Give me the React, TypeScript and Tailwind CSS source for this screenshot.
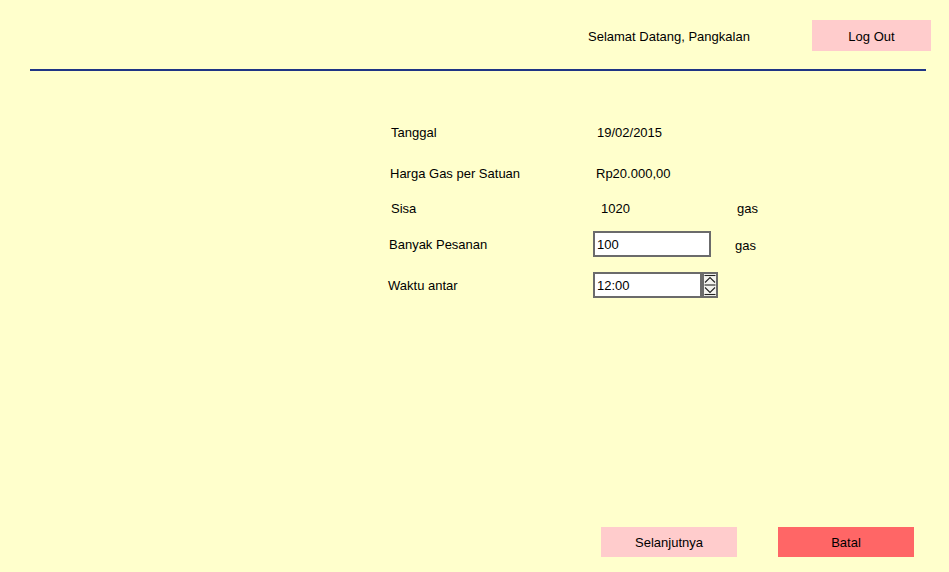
import React from "react";

function Spinner() {
  return (
    <div className="w-[16px] h-[26px] border-2 border-[#6b6b6b] bg-[#f4f4f0] flex items-center justify-center">
      <svg width="12" height="22" viewBox="0 0 12 22" fill="none" stroke="#222" strokeWidth="1.1">
        <line x1="0.5" y1="1.5" x2="11.5" y2="1.5" />
        <polyline points="1,8.5 6,3.5 11,8.5" />
        <line x1="0.5" y1="11" x2="11.5" y2="11" />
        <polyline points="1,13.5 6,18.5 11,13.5" />
        <line x1="0.5" y1="20.5" x2="11.5" y2="20.5" />
      </svg>
    </div>
  );
}

export default function App() {
  return (
    <div className="w-[949px] h-[572px] bg-[#ffffcc] flex flex-col text-[13px] text-black font-['Liberation_Sans',Arial,sans-serif] overflow-hidden">
      {/* Header */}
      <div className="flex items-center pt-[20px] h-[51px]">
        <span className="ml-[588px] pt-[2px]">Selamat Datang, Pangkalan</span>
        <button className="ml-auto mr-[18px] w-[119px] h-[31px] bg-[#ffcccc] text-[13px] pt-[2px]">Log Out</button>
      </div>
      <div className="mt-[18px] ml-[30px] w-[896px] h-[2px] bg-[#1f3585]" />

      {/* Form */}
      <div className="mt-[41px] ml-[388px] flex flex-col">
        <div className="flex items-center h-[40px] pt-[2px]">
          <div className="w-[205px] pl-[3px]">Tanggal</div>
          <div className="pl-[4px]">19/02/2015</div>
        </div>
        <div className="flex items-center h-[42px] pt-[2px]">
          <div className="w-[205px] pl-[2px]">Harga Gas per Satuan</div>
          <div className="pl-[3px]">Rp20.000,00</div>
        </div>
        <div className="flex items-center h-[28px] pt-[2px]">
          <div className="w-[205px] pl-[3px]">Sisa</div>
          <div className="w-[144px] pl-[8px]">1020</div>
          <div>gas</div>
        </div>
        <div className="flex items-center h-[44px]">
          <div className="w-[205px] pl-[1px] pt-[2px]">Banyak Pesanan</div>
          <div className="w-[118px] h-[26px] border-2 border-[#6b6b6b] bg-white flex items-center pl-[2px] pt-[1px]">100</div>
          <div className="ml-[24px] pt-[4px]">gas</div>
        </div>
        <div className="flex items-center h-[38px]">
          <div className="w-[205px] pt-[2px]">Waktu antar</div>
          <div className="w-[109px] h-[26px] border-2 border-[#6b6b6b] bg-white flex items-center pl-[2px] pt-[2px]">12:00</div>
          <Spinner />
        </div>
      </div>

      {/* Footer */}
      <div className="mt-auto mb-[15px] flex justify-end gap-[41px] mr-[35px]">
        <button className="w-[136px] h-[30px] bg-[#ffcccc] text-[13px] pt-[2px]">Selanjutnya</button>
        <button className="w-[136px] h-[30px] bg-[#ff6666] text-[13px] pt-[2px]">Batal</button>
      </div>
    </div>
  );
}
